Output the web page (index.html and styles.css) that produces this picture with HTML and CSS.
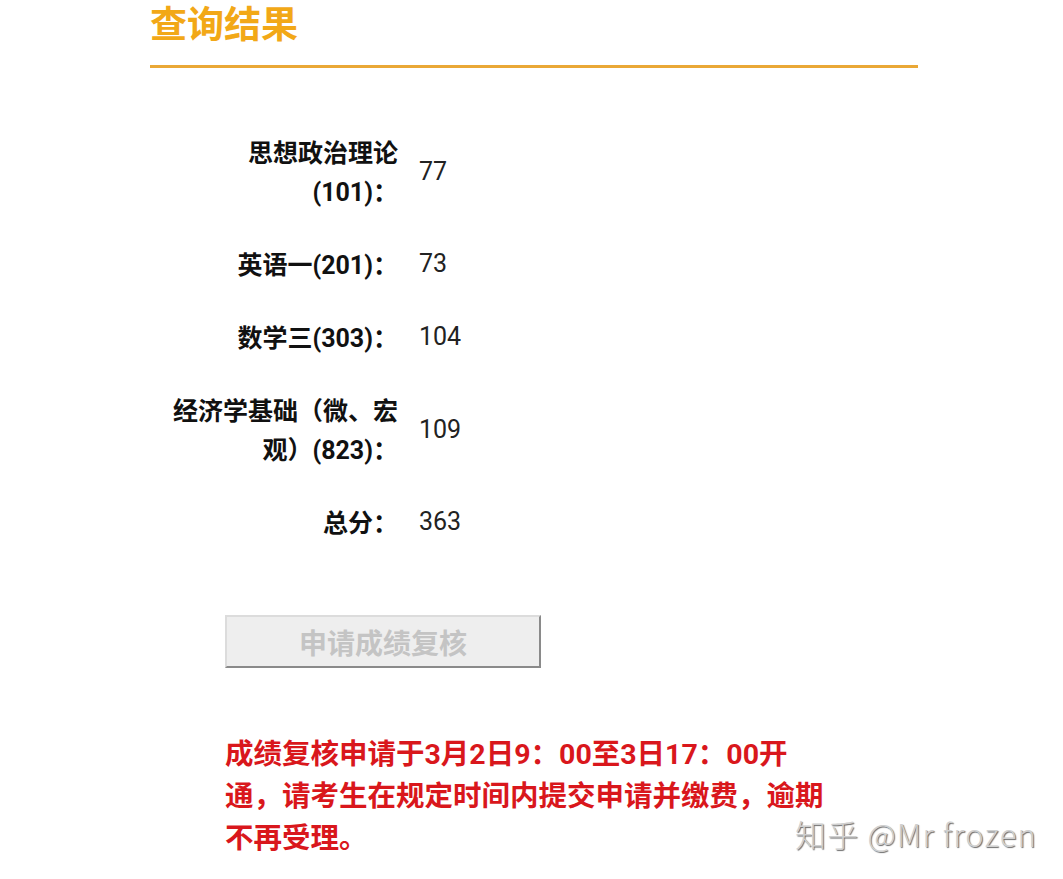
FILE: index.html
```html
<!DOCTYPE html>
<html lang="zh-CN">
<head>
<meta charset="utf-8">
<title>查询结果</title>
<link rel="stylesheet" href="styles.css">
</head>
<body>
<div class="page">
  <div class="header">
    <h1 class="title">查询结果</h1>
  </div>
  <div class="scores">
    <div class="row"><div class="label">思想政治理论(101)：</div><div class="value">77</div></div>
    <div class="row"><div class="label">英语一(201)：</div><div class="value">73</div></div>
    <div class="row"><div class="label">数学三(303)：</div><div class="value">104</div></div>
    <div class="row"><div class="label">经济学基础（微、宏观）(823)：</div><div class="value">109</div></div>
    <div class="row"><div class="label">总分：</div><div class="value">363</div></div>
  </div>
  <button class="review-btn" disabled>申请成绩复核</button>
  <p class="notice">成绩复核申请于3月2日9：00至3日17：00开通，请考生在规定时间内提交申请并缴费，逾期不再受理。</p>
</div>
<div class="watermark">知乎 @Mr frozen</div>
</body>
</html>
```
FILE: styles.css
```css
html, body {
  margin: 0;
  padding: 0;
  background: #ffffff;
}
body {
  font-family: Roboto, "Noto Sans CJK SC", sans-serif;
  width: 1063px;
  height: 879px;
  overflow: hidden;
  position: relative;
}
.page {
  padding-left: 150px;
  width: 768px;
}
.header {
  padding-bottom: 13px;
  border-bottom: 3px solid #eaa836;
}
.title {
  margin: 0;
  font-size: 37px;
  line-height: 52px;
  font-weight: 700;
  color: #f2a817;
}
.scores {
  margin-top: 66px;
  display: flex;
  flex-direction: column;
  gap: 34px;
}
.row {
  display: flex;
  align-items: center;
}
.label {
  width: 230px;
  margin-left: 18px;
  text-align: right;
  font-size: 25px;
  line-height: 39px;
  font-weight: 700;
  color: #111;
}
.value {
  margin-left: 21px;
  margin-top: -4px;
  font-size: 25px;
  line-height: 39px;
  color: #222;
}
.review-btn {
  display: block;
  margin: 72px 0 0 75px;
  width: 316px;
  height: 53px;
  padding: 0;
  background: #eeeeee;
  border-style: solid;
  border-width: 2px;
  border-color: #dcdcdc #8a8a8a #8a8a8a #dcdcdc;
  font-family: Roboto, "Noto Sans CJK SC", sans-serif;
  font-size: 28px;
  font-weight: 700;
  color: #c4c4c4;
}
.notice {
  margin: 66px 0 0 75px;
  width: 612px;
  font-size: 28.5px;
  line-height: 42px;
  font-weight: 700;
  color: #d9171c;
}
.watermark {
  position: absolute;
  left: 795px;
  top: 817px;
  font-family: "Noto Sans CJK SC", sans-serif;
  font-size: 31px;
  line-height: 34px;
  font-weight: 300;
  letter-spacing: 1.2px;
  color: #d0d0d0;
  text-shadow: 1px 1px 1px #6a6a6a;
  white-space: nowrap;
}
```
